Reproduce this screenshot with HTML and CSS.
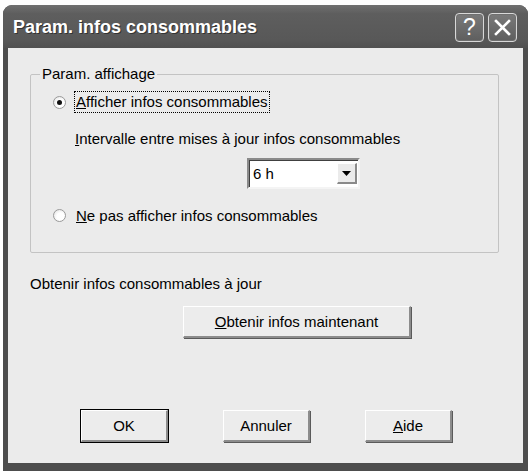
FILE: index.html
```html
<!DOCTYPE html>
<html lang="fr">
<head>
<meta charset="utf-8">
<title>Param. infos consommables</title>
<link rel="stylesheet" href="styles.css">
</head>
<body>
<div class="window">
  <div class="titlebar">
    <span class="title">Param. infos consommables</span>
    <div class="tbtns">
      <span class="tbtn">?</span>
      <span class="tbtn close">
        <svg width="17" height="17" viewBox="0 0 17 17"><path d="M2 2 L15 15 M15 2 L2 15" stroke="#fff" stroke-width="2.6" stroke-linecap="square"/></svg>
      </span>
    </div>
  </div>
  <div class="client">
    <fieldset class="group">
      <legend>Param. affichage</legend>
      <div class="row radio-row">
        <span class="radio checked"></span>
        <span class="focus"><u>A</u>fficher infos consommables</span>
      </div>
      <div class="row interval"><u>I</u>ntervalle entre mises à jour infos consommables</div>
      <div class="row select-row">
        <div class="select">
          <span class="sel-val">6 h</span>
          <span class="sel-btn"><svg width="9" height="5" viewBox="0 0 9 5"><path d="M0 0 H9 L4.5 5 Z" fill="#000"/></svg></span>
        </div>
      </div>
      <div class="row radio-row second">
        <span class="radio"></span>
        <span class="label"><u>N</u>e pas afficher infos consommables</span>
      </div>
    </fieldset>
    <div class="caption">Obtenir infos consommables à jour</div>
    <button class="btn wide"><u>O</u>btenir infos maintenant</button>
    <div class="footer">
      <button class="btn default">OK</button>
      <button class="btn">Annuler</button>
      <button class="btn"><u>A</u>ide</button>
    </div>
  </div>
</div>
</body>
</html>
```
FILE: styles.css
```css
html, body {
  margin: 0;
  background: #fff;
}
body {
  padding: 5px 3px 0 3px;
  font-family: "Liberation Sans", Arial, sans-serif;
  font-size: 15px;
  color: #000;
}
.window {
  width: 525px;
  height: 466px;
  background: #4d4d4d;
  border-radius: 9px 9px 0 0;
  display: flex;
  flex-direction: column;
  box-sizing: border-box;
}
.titlebar {
  height: 43px;
  display: flex;
  align-items: center;
  justify-content: space-between;
  padding: 0 11px 0 10px;
  background: linear-gradient(#707070, #5e5e5e 20%, #585858 80%, #505050);
  border-radius: 9px 9px 0 0;
  box-sizing: border-box;
}
.title {
  color: #fff;
  font-weight: bold;
  font-size: 18px;
  text-shadow: 1px 1px 0 #333;
  margin-top: 2px;
}
.tbtns {
  display: flex;
  gap: 4px;
  margin-top: 2px;
}
.tbtn {
  width: 27px;
  height: 27px;
  border: 1px solid #d8d8d8;
  border-radius: 4px;
  background: linear-gradient(#7a7a7a, #5e5e5e);
  color: #fff;
  font-size: 23px;
  display: flex;
  align-items: center;
  justify-content: center;
  box-shadow: inset 0 0 0 1px #6f6f6f;
}
.client {
  flex: 1;
  margin: 0 5px 8px 5px;
  background: #ebebeb;
  display: flex;
  flex-direction: column;
  align-items: flex-start;
}
.group {
  margin: 18px 24px 0 22px;
  align-self: stretch;
  border: 1px solid #c3c3c3;
  border-radius: 2px;
  padding: 9px 0 26px 22px;
  min-width: 0;
}
.group legend {
  padding: 0 2px;
  margin-left: -13px;
  line-height: 16px;
}
.row {
  display: flex;
  align-items: center;
}
.radio-row {
  height: 22px;
}
.radio {
  width: 11px;
  height: 11px;
  border-radius: 50%;
  border: 1px solid #9a9a9a;
  background: radial-gradient(circle at 60% 60%, #fff 40%, #dcdcdc 100%);
  margin-right: 9px;
  position: relative;
  flex: none;
}
.radio.checked::after {
  content: "";
  position: absolute;
  left: 3px;
  top: 3px;
  width: 5px;
  height: 5px;
  border-radius: 50%;
  background: #111;
}
.focus {
  outline: 1px dotted #000;
  outline-offset: 0;
  padding: 2px 1px;
  line-height: 16px;
}
.label {
  padding: 0 1px;
}
.interval {
  margin-top: 15px;
  height: 20px;
  padding-left: 22px;
}
.select-row {
  margin-top: 10px;
  padding-left: 194px;
}
.select {
  width: 104px;
  height: 25px;
  border: 2px solid;
  border-color: #8a8a8a #f4f4f4 #f4f4f4 #8a8a8a;
  box-shadow: inset 1px 1px 0 #404040;
  background: #fff;
  display: flex;
  align-items: center;
  justify-content: space-between;
  padding: 1px 1px 1px 4px;
}
.sel-val {
  line-height: 16px;
}
.sel-btn {
  width: 20px;
  height: 21px;
  background: #ebebeb;
  border-style: solid;
  border-width: 1px 2px 2px 1px;
  border-color: #fff #8a8a8a #8a8a8a #fff;
  box-sizing: border-box;
  display: flex;
  align-items: center;
  justify-content: center;
}
.second {
  margin-top: 15px;
}
.caption {
  margin: 23px 0 0 22px;
  line-height: 16px;
}
.btn {
  font-family: "Liberation Sans", Arial, sans-serif;
  font-size: 15px;
  color: #000;
  background: #ececec;
  border-style: solid;
  border-width: 1px 2px 2px 1px;
  border-color: #fff #8c8c8c #8c8c8c #fff;
  box-shadow: 1px 1px 0 #5a5a5a;
  height: 32px;
  width: 87px;
  padding: 0;
  box-sizing: border-box;
}
.wide {
  width: 228px;
  margin: 14px 0 0 175px;
}
.footer {
  display: flex;
  gap: 55px;
  margin: 72px 0 0 73px;
}
.btn.default {
  outline: 1px solid #000;
  box-shadow: none;
}
```
